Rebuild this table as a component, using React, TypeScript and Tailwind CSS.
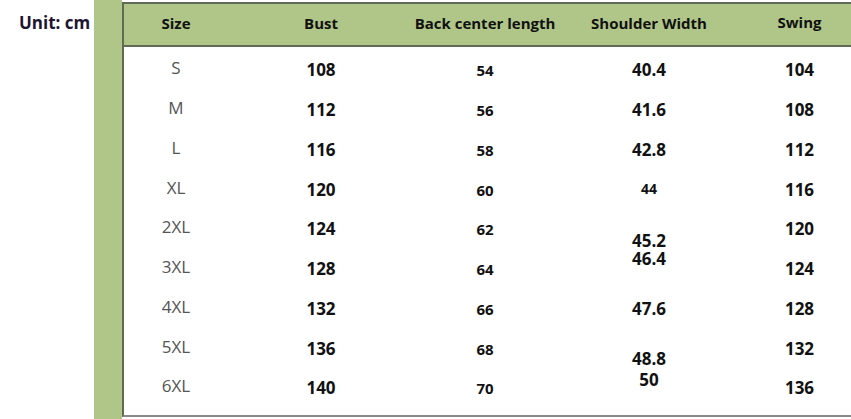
import React from "react";

const sizes = ["S", "M", "L", "XL", "2XL", "3XL", "4XL", "5XL", "6XL"];
const bust = ["108", "112", "116", "120", "124", "128", "132", "136", "140"];
const back = ["54", "56", "58", "60", "62", "64", "66", "68", "70"];
const swing = ["104", "108", "112", "116", "120", "124", "128", "132", "136"];

export default function App() {
  return (
    <div
      className="flex w-[851px] h-[419px] bg-white overflow-hidden"
      style={{ fontFamily: '"Open Sans", "Noto Sans", sans-serif' }}
    >
      <div className="w-[94px] shrink-0 pt-[11px]">
        <div className="pl-[19px] text-[17px] font-bold leading-[24px] text-[#1e1530] whitespace-nowrap">
          Unit: cm
        </div>
      </div>
      <div className="w-[28px] shrink-0 bg-[#b0c688]" />
      <div className="flex-1 flex flex-col pt-[2px]">
        <div className="flex flex-col border-t-2 border-l-2 border-[#5f6b52] border-b-2 border-b-[#8a8a8a] h-[415px]">
          <div className="grid grid-cols-[104px_186px_142px_186px_101px] h-[43px] bg-[#b0c688] border-b-2 border-[#5f6b52] items-center text-[15px] font-bold text-[#111] leading-none">
            <div className="text-center pb-[2px]">Size</div>
            <div className="text-center pb-[2px]">Bust</div>
            <div className="text-center pb-[2px]">Back center length</div>
            <div className="text-center pb-[2px]">Shoulder Width</div>
            <div className="text-center pb-[4px] pl-[14px]">Swing</div>
          </div>
          <div className="grid grid-cols-[104px_186px_142px_186px_101px] pt-[1px] text-[#111]">
            <div className="flex flex-col">
              {sizes.map((s) => (
                <div key={s} className="h-[39.75px] flex items-center justify-center text-[17px] text-[#555] leading-none">
                  {s}
                </div>
              ))}
            </div>
            <div className="flex flex-col pt-[2px]">
              {bust.map((s, i) => (
                <div key={i} className="h-[39.75px] flex items-center justify-center text-[17px] font-bold leading-none">
                  {s}
                </div>
              ))}
            </div>
            <div className="flex flex-col pt-[3px]">
              {back.map((s, i) => (
                <div key={i} className="h-[39.75px] flex items-center justify-center text-[15px] font-bold leading-none">
                  {s}
                </div>
              ))}
            </div>
            <div className="flex flex-col pt-[2px] font-bold">
              <div className="h-[39.75px] flex items-center justify-center text-[17px] leading-none">40.4</div>
              <div className="h-[39.75px] flex items-center justify-center text-[17px] leading-none">41.6</div>
              <div className="h-[39.75px] flex items-center justify-center text-[17px] leading-none">42.8</div>
              <div className="h-[39.75px] flex items-center justify-center text-[14px] leading-none">44</div>
              <div className="h-[79.5px] flex flex-col items-center justify-center text-[17px] leading-[18px] pt-[2px]">
                <div>45.2</div>
                <div>46.4</div>
              </div>
              <div className="h-[39.75px] flex items-center justify-center text-[17px] leading-none">47.6</div>
              <div className="h-[79.5px] flex flex-col items-center justify-center text-[17px] leading-[21px] pt-[2px]">
                <div>48.8</div>
                <div>50</div>
              </div>
            </div>
            <div className="flex flex-col pt-[2px] pl-[14px]">
              {swing.map((s, i) => (
                <div key={i} className="h-[39.75px] flex items-center justify-center text-[17px] font-bold leading-none">
                  {s}
                </div>
              ))}
            </div>
          </div>
        </div>
      </div>
    </div>
  );
}
